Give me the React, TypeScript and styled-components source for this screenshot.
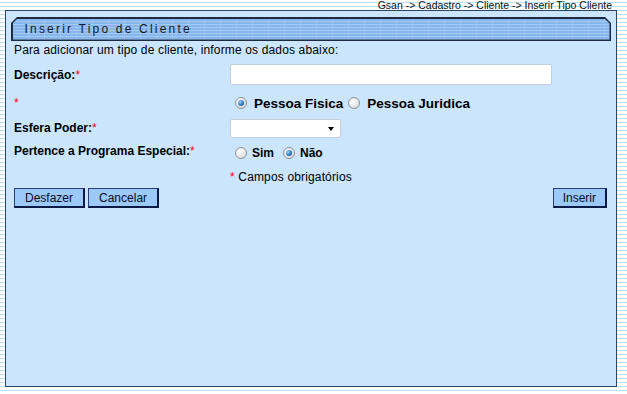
import React, { useState } from 'react';
import styled, { createGlobalStyle } from 'styled-components';

const GlobalStyle = createGlobalStyle`
  html, body {
    margin: 0;
    padding: 0;
  }
  body {
    font-family: 'Liberation Sans', Arial, sans-serif;
    font-size: 12px;
    color: #000;
    background: repeating-linear-gradient(
      to bottom,
      #ffffff 0px,
      #ffffff 2px,
      #bcdef3 2px,
      #bcdef3 3px,
      #ffffff 3px,
      #ffffff 4px
    );
  }
  #root {
    width: 627px;
    height: 394px;
  }
`;

export default function App() {
  const [pessoa, setPessoa] = useState<'fisica' | 'juridica'>('fisica');
  const [especial, setEspecial] = useState<'sim' | 'nao'>('nao');

  return (
    <>
      <GlobalStyle />
      <Page>
        <Breadcrumb>Gsan -&gt; Cadastro -&gt; Cliente -&gt; Inserir Tipo Cliente</Breadcrumb>
        <Panel>
          <TitleBar>
            <TitleInner>Inserir Tipo de Cliente</TitleInner>
          </TitleBar>
          <Content>
            <Intro>Para adicionar um tipo de cliente, informe os dados abaixo:</Intro>

            <Row $h={27} $mt={4}>
              <Label>
                Descrição:<Req>*</Req>
              </Label>
              <TextInput type="text" />
            </Row>

            <Row $h={30}>
              <Label>
                <Req>*</Req>
              </Label>
              <Options>
                <Radio $checked={pessoa === 'fisica'} onClick={() => setPessoa('fisica')} />
                <OptionText $big>Pessoa Fisica</OptionText>
                <Radio $checked={pessoa === 'juridica'} onClick={() => setPessoa('juridica')} />
                <OptionText $big>Pessoa Juridica</OptionText>
              </Options>
            </Row>

            <Row $h={20}>
              <Label>
                Esfera Poder:<Req>*</Req>
              </Label>
              <SelectWrap>
                <Select defaultValue="">
                  <option value=""></option>
                </Select>
                <Arrow />
              </SelectWrap>
            </Row>

            <Row $h={24} $mt={3}>
              <Label $top>
                Pertence a Programa Especial:<Req>*</Req>
              </Label>
              <Options>
                <Radio $checked={especial === 'sim'} onClick={() => setEspecial('sim')} />
                <OptionText>Sim</OptionText>
                <Radio $checked={especial === 'nao'} onClick={() => setEspecial('nao')} />
                <OptionText>Não</OptionText>
              </Options>
            </Row>

            <Row $h={23}>
              <span />
              <Note>
                <Req>*</Req> Campos obrigatórios
              </Note>
            </Row>

            <Actions>
              <Group>
                <Button>Desfazer</Button>
                <Button>Cancelar</Button>
              </Group>
              <Button $narrow>Inserir</Button>
            </Actions>
          </Content>
        </Panel>
      </Page>
    </>
  );
}

const Page = styled.div`
  padding: 0 10px 0 5px;
`;

const Breadcrumb = styled.div`
  height: 10px;
  line-height: 10px;
  font-size: 10.5px;
  text-align: right;
  padding-right: 5px;
  color: #111;
  white-space: nowrap;
`;

const Panel = styled.div`
  width: 610px;
  height: 375px;
  background: #cbe5fc;
  border: 1px solid #2b4562;
  display: flex;
  flex-direction: column;
`;

const TitleBar = styled.div`
  margin: 6px 5px 0 5px;
  height: 24px;
  background: #1c2b40;
  padding: 1.5px;
  box-sizing: border-box;
  clip-path: polygon(6px 0, calc(100% - 6px) 0, 100% 6px, 100% 100%, 0 100%, 0 6px);
`;

const TitleInner = styled.div`
  height: 100%;
  box-sizing: border-box;
  padding-left: 12px;
  line-height: 21px;
  font-size: 12px;
  letter-spacing: 2.2px;
  color: #141826;
  clip-path: polygon(5px 0, calc(100% - 5px) 0, 100% 5px, 100% 100%, 0 100%, 0 5px);
  background:
    repeating-linear-gradient(
      to right,
      transparent 0px,
      transparent 15px,
      rgba(255, 255, 255, 0.12) 15px,
      rgba(255, 255, 255, 0.12) 16px
    ),
    repeating-linear-gradient(
      to bottom,
      #86b6ec 0px,
      #86b6ec 2px,
      #a2caf5 2px,
      #a2caf5 3px
    );
`;

const Content = styled.div`
  padding: 2px 9px 0 8px;
  display: flex;
  flex-direction: column;
`;

const Intro = styled.div`
  height: 14px;
  line-height: 14px;
  font-size: 12px;
  letter-spacing: 0.15px;
`;

const Row = styled.div<{ $h: number; $mt?: number }>`
  display: grid;
  grid-template-columns: 216px 1fr;
  align-items: center;
  height: ${p => p.$h}px;
  margin-top: ${p => p.$mt ?? 0}px;
`;

const Label = styled.div<{ $top?: boolean }>`
  font-weight: bold;
  font-size: 12px;
  white-space: nowrap;
  margin-top: ${p => (p.$top ? '-4px' : '0')};
`;

const Req = styled.span`
  color: #ff0000;
  font-weight: normal;
`;

const TextInput = styled.input`
  width: 322px;
  height: 21px;
  box-sizing: border-box;
  border: 1px solid #c4cfda;
  border-radius: 2px;
  background: #fff;
  outline: none;
  font-family: inherit;
  font-size: 12px;
`;

const SelectWrap = styled.div`
  position: relative;
  width: 111px;
  height: 19px;
`;

const Select = styled.select`
  appearance: none;
  width: 100%;
  height: 100%;
  box-sizing: border-box;
  border: 1px solid #c4cfda;
  border-radius: 2px;
  background: #fff;
  font-family: inherit;
  font-size: 12px;
  outline: none;
`;

const Arrow = styled.span`
  position: absolute;
  right: 7px;
  top: 8px;
  width: 0;
  height: 0;
  border-left: 3.5px solid transparent;
  border-right: 3.5px solid transparent;
  border-top: 4px solid #000;
  pointer-events: none;
`;

const Options = styled.div`
  display: flex;
  align-items: center;
  padding-left: 5px;
`;

const Radio = styled.span<{ $checked?: boolean }>`
  position: relative;
  width: 12px;
  height: 12px;
  box-sizing: border-box;
  border-radius: 50%;
  border: 1px solid #8d9296;
  background: radial-gradient(circle at 35% 35%, #ffffff 0%, #e4e6e8 60%, #c8cbcf 100%);
  cursor: pointer;
  flex: none;

  &::after {
    content: '';
    display: ${p => (p.$checked ? 'block' : 'none')};
    position: absolute;
    left: 2px;
    top: 2px;
    width: 6px;
    height: 6px;
    border-radius: 50%;
    background: radial-gradient(circle at 35% 35%, #9fd4ff 0%, #2a76c0 55%, #0d3f78 100%);
  }
`;

const OptionText = styled.span<{ $big?: boolean }>`
  font-weight: bold;
  font-size: ${p => (p.$big ? '13.5px' : '12px')};
  margin: 0 ${p => (p.$big ? '5px' : '9px')} 0 ${p => (p.$big ? '7px' : '5px')};
  white-space: nowrap;
`;

const Note = styled.div`
  font-size: 12px;
  letter-spacing: 0.15px;
`;

const Actions = styled.div`
  display: flex;
  justify-content: space-between;
  align-items: center;
`;

const Group = styled.div`
  display: flex;
  gap: 3px;
`;

const Button = styled.button<{ $narrow?: boolean }>`
  height: 20px;
  padding: 0 ${p => (p.$narrow ? '9px' : '10px')};
  box-sizing: border-box;
  font-family: 'Liberation Sans', Arial, sans-serif;
  font-size: 12px;
  color: #0a0a1a;
  background: #9ccaf8;
  border-top: 1px solid #2d3f6e;
  border-left: 1px solid #2d3f6e;
  border-right: 2px solid #0b1a46;
  border-bottom: 2px solid #0b1a46;
  border-radius: 0;
  cursor: pointer;
`;
